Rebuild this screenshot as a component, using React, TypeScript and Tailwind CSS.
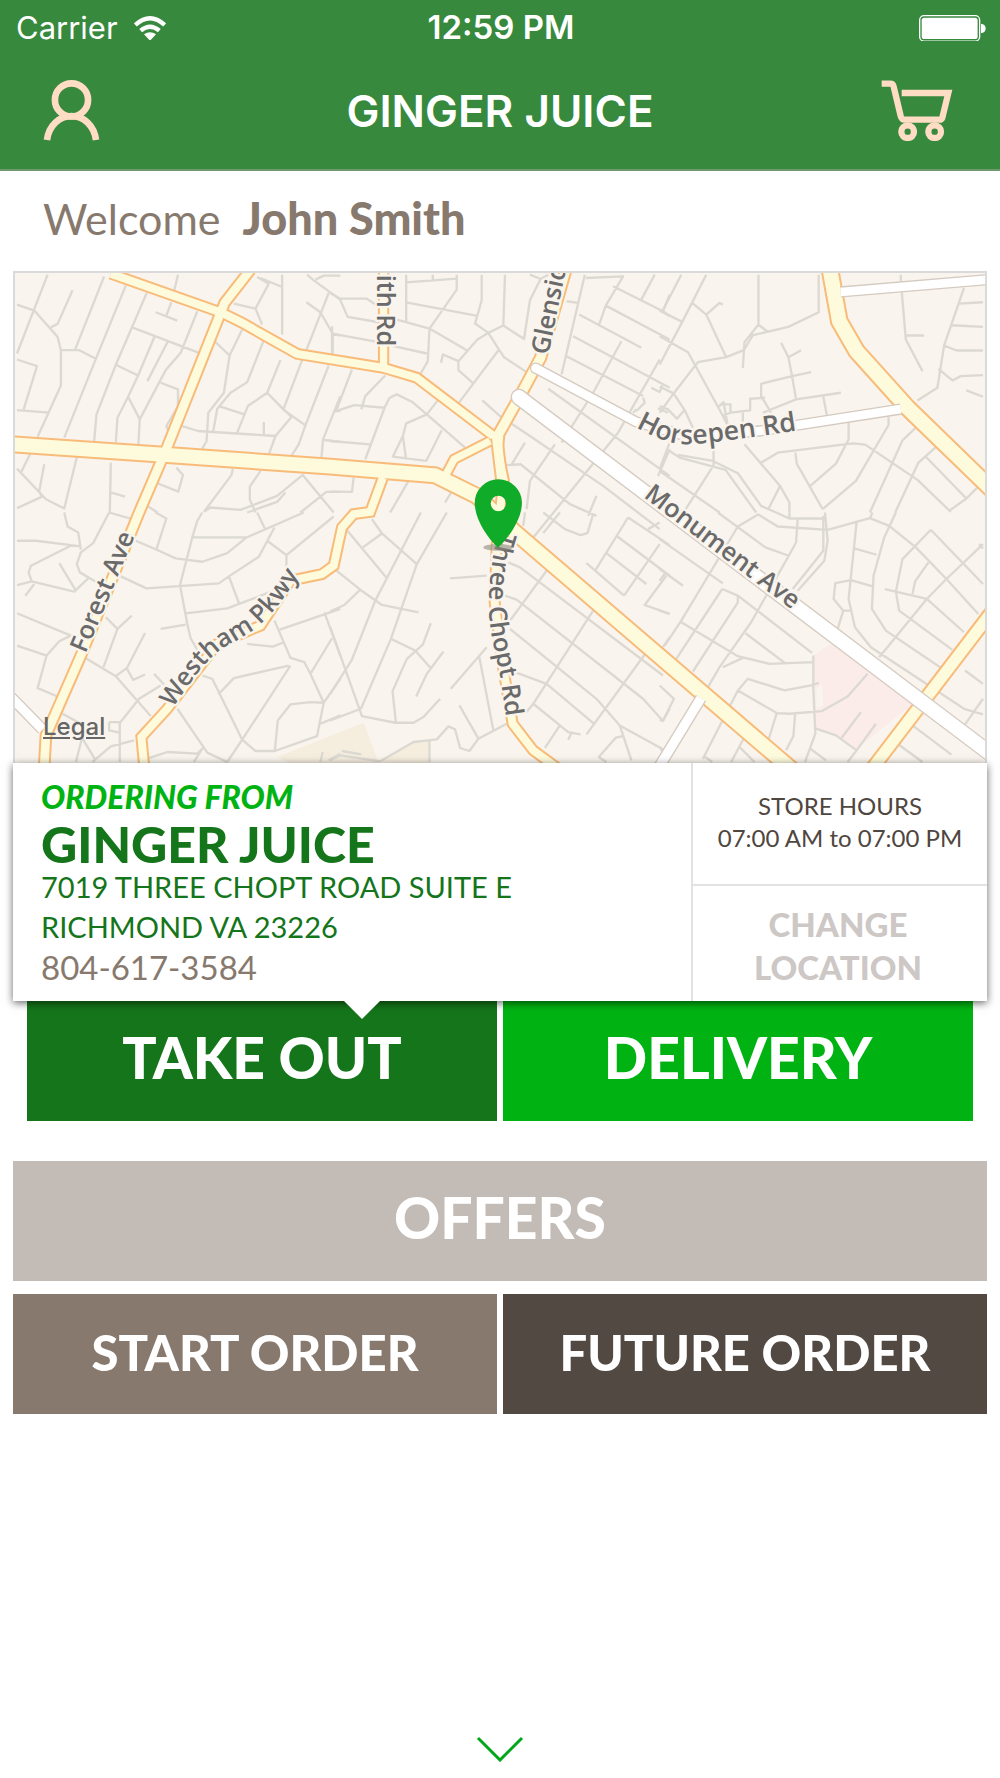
import React from "react";

type StreetTile = { x: number; y: number; d: string };

// Side streets, grouped by map tile. Each path is local to its tile.
const STREET_TILES: StreetTile[] = [
  {
    x: 0,
    y: 780,
    d: `M140 35L48 272M215 82L170 183L150 193M48 125L100 143L170 222L180 262V368L110 522M180 262H235L285 288
      M310 40L222 262M375 68L285 288L190 525M438 90L345 306L287 455L280 535M48 290L108 310L68 440M48 442L145 450
      M532 35L520 85M465 148L530 173M512 118L497 158M590 145L540 270L495 322L417 470L413 545M390 192L595 270
      M462 220L412 338L382 402L350 465L345 540M382 402L417 470M345 306L412 338M503 233L440 355M480 360L532 380V430L497 490L503 505
      M700 122L765 137L805 62L770 42M765 137L785 185M780 45L845 72M845 35V215M645 238L687 278L725 200M687 278L670 390L623 450L618 535L605 558
      M790 232L740 358L690 390L650 438L638 505M655 430L732 455L742 430L800 390L840 292M732 455L710 510M545 490L592 505L825 520L873 463L800 390M790 478V520
      M825 520L805 575M848 442L905 292M800 390L850 442L915 488L985 308M915 488L895 545L873 580M920 35L940 52L1020 110M945 50L970 38H1020M985 90L918 262
      M918 118L960 148L997 212L1020 218M997 212V275M1020 400L968 530L963 588M972 532L1020 538M1005 445H1020
      M88 573L60 630M48 618L135 710L190 738L228 583M130 605L115 685L122 703L48 737M330 600L327 750M332 690L373 702M527 615L547 637L533 687L470 662
      M440 730L470 750M697 618L693 637L610 748M780 625L748 672V712L765 750M610 748L630 735L720 742L830 700L907 637L1000 750M855 690L830 718L740 750M900 750L978 688H1020`,
  },
  {
    x: 990,
    y: 780,
    d: `M0 90L28 107L52 162L145 178M28 107H108L145 130M5 190V275M5 212L145 238M200 170L298 197L410 262M298 197L293 295L270 335
      M228 35V175M228 58L380 47M308 35V50M380 35V80L298 197M228 118L438 158M455 35V112L435 182L475 210L520 188L585 230M525 35L520 188
      M475 210L507 260L522 283L590 328M475 210L442 230L385 295V322L428 360M385 295L338 275L333 300M507 260L385 422M190 250L290 272
      M165 338L105 400L93 440M65 320L17 445L72 427L163 435L105 590M178 405L200 395L245 417L290 455L228 482L218 520L228 592M178 405L163 435M218 520L188 582L288 595L335 503M325 410L290 455L405 555M0 535L118 545
      M600 35L632 48M655 35L632 48L600 112L582 230M765 35L695 335M768 45L880 40L828 128L808 185M710 115L745 120M748 155L935 255M850 70L1000 145L1020 160M975 35L935 110M828 128L1020 230M1020 95L1000 145
      M730 220L1020 375M710 280L940 400M875 235L790 390L695 540M990 290L865 510L590 850M940 405L945 420L920 445M965 375L990 388L998 368M985 437L1015 450M920 440L910 450M655 378L1020 640M457 413L510 460L600 520L820 670L990 800
      M525 608L572 605L720 725L800 760M545 605L585 540M675 545L600 655L590 740M1020 560L985 640M800 700L775 760M70 645L65 688L0 687M235 655L180 750M375 670L345 720`,
  },
  {
    x: 1980,
    y: 780,
    d: `M65 35L8 145M0 143L68 177M140 35L68 177L0 305M98 120L140 155L200 283M140 155L180 120L190 125M0 220L85 268L107 308L185 450L205 490M107 308L115 298L200 283L253 262L280 217L387 192L478 148V35
      M250 315L255 238L297 185V35M297 185L325 207M107 308L42 392L0 450M0 372L42 392L75 442L100 495M0 430L25 440L52 468L75 442M175 435L192 418L205 490M180 425H213V450L272 443V408L317 405M188 460L213 450M250 450V485
      M365 240L387 283L398 340L410 410L310 450M387 283L425 262M455 328L398 340L305 363V400L335 450M410 410L545 390M492 402L503 460M568 480V530L530 603L453 670
      M725 35V55M728 88L740 230L790 325M740 218H795M915 75L855 248L835 375L775 413M900 122L972 118M877 187L972 192M855 248L892 263H972M838 318L880 353L905 340L972 337M922 383L972 402
      M688 462V487L590 655L490 740M772 493L730 533L632 750M832 552L778 600L708 750M798 580L922 708M955 675L922 708L870 745M305 600L355 570L580 542L618 546L775 652L875 748M408 570L412 603L490 740
      M255 545L362 670L390 720V750M362 670L328 737M162 560V608L75 745M55 577L160 595L235 632L305 730L350 750M30 565L60 585L198 622L290 750M30 540L0 620M0 625L180 750`,
  },
  {
    x: 0,
    y: 1530,
    d: `M190 0L200 42L232 60L240 112M48 85H105L240 102M205 102L90 160L83 180L92 207L220 238L262 198M48 218L92 207M100 215L73 250M175 152L225 235M325 0L277 92L240 120L228 155L237 180L285 208M325 0L395 20M465 0L497 18L468 108
      M405 85L468 112L525 138L605 148L680 122L738 75L910 0M575 75H738M605 0L590 25L575 75L538 218L560 335L570 378L600 430M360 192L437 228L655 213L685 192L775 133L822 45M770 0L793 48M800 85L858 128L1000 12M858 128V190M685 192L715 272
      M555 303L680 288L820 235M480 350L555 337M48 303L210 370L175 387L137 430L110 528L170 553M48 400L137 430M315 315L350 350L393 310M350 350L308 465M250 435L345 492L415 572L450 612M345 492L378 468L433 362M378 468L397 503L433 487
      M480 520L415 560L357 633V750M325 630H357V662L325 655V630M460 485L490 517M605 490L635 500L725 683L765 717H823L950 672L970 572L930 485L912 450L870 437L822 325M725 683L680 750M725 683L870 460M865 460L700 498L653 547M740 395L817 403L850 390M838 352L1020 290
      M972 300L1020 430M995 378L930 485M970 572L930 570L870 577L832 625L823 717M970 572L1020 500M960 635L1020 610M530 590L620 722L680 750M440 740L500 720L590 725L605 710L580 750M400 685L330 703L283 743L245 680M283 743L275 750M185 605L240 635M243 680L225 750M960 750L967 720M985 745L1020 725`,
  },
  {
    x: 990,
    y: 1530,
    d: `M35 35L172 200M125 20L155 63L260 155M155 63L98 105M272 0L135 265L65 442L0 545M350 0L260 155L182 380L92 590M0 160L90 232L155 278L265 300M90 232L42 278L0 297M0 345L95 612L195 632H250L280 615L330 560M92 590L0 625
      M182 380L255 415L302 468M302 333L278 397L230 440L187 537L197 632M340 418L290 485L258 553M360 198L470 190M470 405L362 530M448 435L490 655M388 580L445 680L530 635M445 680L418 717L390 708L375 652L355 643L320 682L250 690L150 748M298 688V750M0 745L30 730L150 748M35 717L93 727
      M535 150L570 165L1000 490M525 250L560 262L940 560L1000 627L1020 590M540 350L800 560M650 175L540 325M790 295L610 575M555 480L650 515L795 637M800 560L870 640L1000 712M610 575L715 660L752 667M725 662L715 683M690 640L645 708M770 667L950 420M590 600L610 575M870 640L905 745M880 672L858 677L807 735L830 750
      M640 0L705 50L752 68L773 62L790 5M690 0L640 62M585 0L580 40M770 152L883 250M860 70L1020 190M895 15L798 172M830 122L950 215M990 30L955 50M895 15L1020 98M990 95L883 250M1010 190L945 278L1020 305M1000 405L1020 375`,
  },
  {
    x: 1980,
    y: 1530,
    d: `M175 0L318 105L388 130M297 5L235 42L65 325L15 400M295 5L355 42L505 52L632 17L690 40L770 105L862 200L958 305M350 0L390 18H495M390 0V18M415 20L410 90L388 130L275 330L180 465L125 560M497 0L505 85L495 145L415 235M492 10V115L400 230
      M592 30L568 260L587 345L635 405L915 590L972 607M585 108L652 127M710 0L675 75L643 190L638 290L680 355L880 490M640 222L575 203L528 212L523 260L552 295H573M552 295L535 350M632 17L640 0M815 52L730 140L710 238L720 295L880 413M815 52L972 215M808 150L768 207L760 245M677 230L803 260L915 360M972 95L862 200L803 260L660 435M960 95L972 108
      M918 475L972 515M972 560L918 637M0 80L190 213M0 170L70 220M0 295L30 305M188 230L235 250L458 422M188 230L50 440M235 250V270L100 478M65 330L235 432L330 455L462 450M258 363L380 455M250 437L190 465M15 185L0 205
      M235 535L265 500L375 535L455 520L478 512M235 535L352 603L390 605L488 597L565 553L625 485M235 535L130 740M352 603L325 690M407 608L402 672L380 715M462 430V530L468 665L437 750M470 650L530 670L592 715L565 750M605 600L545 680M650 635L592 715M450 708L500 745M242 707L285 750M255 675L215 750M137 735L158 750M760 640L877 728M715 695L790 750M0 520L43 560L10 625H0M0 705L10 720`,
  },
];

const YELLOW_ROADS = [
  { d: "M330 812L665 930L725 960L890 1053L1150 1095L1250 1125L1480 1300", w: 36 },
  { d: "M750 800L672 900L500 1332L415 1530L240 1960L135 2200L130 2290", w: 38 },
  { d: "M1150 800V1092", w: 34 },
  { d: "M1698 800L1622 1065L1560 1180L1490 1305L1505 1430", w: 40 },
  { d: "M1500 1300L1495 1345L1515 1440", w: 32 },
  { d: "M1470 1315L1362 1370L1335 1420", w: 34 },
  { d: "M1148 1425L1110 1528L1060 1535L1025 1575L1000 1690L965 1715L870 1735L780 1870L650 1925L500 2120L422 2205L430 2290", w: 36 },
  { d: "M1510 1430L1490 1630L1484 1800L1510 2000L1538 2165L1600 2245L1675 2300", w: 36 },
  { d: "M30 1325L500 1357L990 1392L1305 1418L1430 1480L1540 1585L2010 1988L2380 2305", w: 54 },
  { d: "M2492 800L2520 955L2572 1045L2725 1215L2990 1472", w: 56 },
  { d: "M2985 1820L2615 2305", w: 46 },
];

const WHITE_ROADS = [
  { d: "M1605 1095L1910 1258L2060 1300L2280 1285L2705 1219", w: 34 },
  { d: "M1555 1182L2990 2267", w: 50 },
  { d: "M2524 867L2990 828", w: 34 },
  { d: "M2104 2088L1978 2295", w: 36 },
  { d: "M30 2085L125 2182", w: 36 },
];

const ROAD_ENDS = [
  { cx: 1607, cy: 1096, r: 17 },
  { cx: 1557, cy: 1183, r: 25 },
];

const StoreMap = () => (
  <svg
    viewBox="42 810 2916 1473"
    className="block w-full"
    role="img"
    aria-label="Map of the store location"
  >
    <defs>
      <path id="forest" d="M254 1955L424 1548" />
      <path id="westham" d="M516 2118C586 2016 626 1956 696 1921S832 1836 925 1666" />
      <path id="chopt" d="M1500 1585Q1480 1640 1474 1700Q1460 1800 1473 1890L1500 2020L1535 2260" />
      <path id="glenside" d="M1645 1058L1715 720" />
      <path id="horsepen" d="M1908 1274Q2000 1325 2060 1325Q2130 1325 2460 1273" />
      <path id="monument" d="M1930 1483L2500 1915" />
    </defs>

    <rect x="42" y="810" width="2916" height="1473" fill="#f9f4ed" />
    <path d="M2442 1960L2495 1925L2740 2105L2572 2242L2510 2200L2450 2180Z" fill="#fbecea" />
    <path d="M2452 2060L2468 2045L2472 2110L2450 2118Z" fill="#f9f4ed" />
    <path d="M830 2265L1090 2162L1138 2290H880ZM1140 2280L1240 2220L1288 2215V2290Z" fill="#f5eddd" />

    <g fill="none" stroke="#dcd9d2" strokeWidth="7" strokeLinejoin="round">
      {STREET_TILES.map((tile) => (
        <path key={`${tile.x}-${tile.y}`} d={tile.d} transform={`translate(${tile.x} ${tile.y})`} />
      ))}
    </g>

    <g fill="none" stroke="#f8bb79">
      {YELLOW_ROADS.map((road) => (
        <path key={road.d} d={road.d} strokeWidth={road.w} />
      ))}
    </g>
    <g fill="none" stroke="#fdfbdb">
      {YELLOW_ROADS.map((road) => (
        <path key={road.d} d={road.d} strokeWidth={road.w - 12} />
      ))}
    </g>
    <g fill="none" stroke="#d5cac0">
      {WHITE_ROADS.map((road) => (
        <path key={road.d} d={road.d} strokeWidth={road.w} />
      ))}
      {ROAD_ENDS.map((end) => (
        <circle key={end.cx} cx={end.cx} cy={end.cy} r={end.r} fill="#d5cac0" stroke="none" />
      ))}
    </g>
    <g fill="none" stroke="#ffffff">
      {WHITE_ROADS.map((road) => (
        <path key={road.d} d={road.d} strokeWidth={road.w - 8} />
      ))}
      {ROAD_ENDS.map((end) => (
        <circle key={end.cx} cx={end.cx} cy={end.cy} r={end.r - 4} fill="#ffffff" stroke="none" />
      ))}
    </g>

    <g
      fill="#6a6a6a"
      stroke="#f9f4ed"
      strokeWidth="14"
      strokeLinejoin="round"
      paintOrder="stroke"
      fontSize="76"
      className="font-['Open_Sans',sans-serif] font-semibold"
    >
      <text><textPath href="#forest">Forest Ave</textPath></text>
      <text><textPath href="#westham">Westham Pkwy</textPath></text>
      <text><textPath href="#chopt">Three Chopt Rd</textPath></text>
      <text><textPath href="#glenside">Glensid</textPath></text>
      <text fontSize="80"><textPath href="#horsepen">Horsepen Rd</textPath></text>
      <text><textPath href="#monument">Monument Ave</textPath></text>
      <text transform="translate(1131 1030) rotate(90)" textAnchor="end">ith Rd</text>
    </g>

    <ellipse cx="1494" cy="1635" rx="44" ry="10" fill="#8d897c" opacity="0.6" />
    <path
      fillRule="evenodd"
      fill="#10ab28"
      d="M1424 1501a71 71 0 0 1 142 0C1566 1545 1532 1600 1494 1636C1456 1600 1424 1545 1424 1501ZM1495 1480a23 23 0 1 0 0 46a23 23 0 0 0 0-46Z"
    />
  </svg>
);

const StatusBar = () => (
  <div className="grid grid-cols-3 items-center h-14 pl-4 pr-[14px] text-white">
    <div className="flex items-center gap-4 text-[31px]">
      <span>Carrier</span>
      <svg viewBox="0 0 96 74" className="w-8" fill="none" stroke="#ffffff" strokeWidth="13">
        <path d="M4 27Q48 -13 92 27" />
        <path d="M20 44Q48 20 76 44" />
        <path d="M48 74L30 55Q48 42 66 55Z" fill="#ffffff" stroke="none" />
      </svg>
    </div>
    <span className="text-center text-[33px] font-semibold whitespace-nowrap">12:59 PM</span>
    <svg viewBox="0 0 200 80" className="w-[67px] justify-self-end" fill="#ffffff">
      <rect x="2" y="2" width="179" height="76" rx="13" fill="none" stroke="#ffffff" strokeWidth="4" />
      <rect x="8" y="8" width="167" height="64" rx="8" />
      <path d="M185 26Q199 28 199 40T185 54Z" />
    </svg>
  </div>
);

const NavBar = () => (
  <div className="grid grid-cols-[1fr_auto_1fr] items-center pt-6 pb-7 px-[43px]">
    <button type="button" aria-label="Account" className="justify-self-start">
      <svg viewBox="126 238 172 184" className="w-[57px]" fill="none" stroke="#ffdcc4" strokeWidth="20">
        <circle cx="212" cy="298" r="50" />
        <path d="M138 419C144 374 176 347 212 347S280 374 286 419" />
      </svg>
    </button>
    <h1 className="text-white text-[44px] leading-[60px] font-semibold">GINGER JUICE</h1>
    <button type="button" aria-label="Cart" className="justify-self-end pr-1">
      <svg viewBox="1146 242 216 184" className="w-[72px]" fill="none" stroke="#ffdcc4" strokeWidth="19">
        <path d="M1148 253H1174Q1182 253 1184 262L1205 350Q1208 361 1216 361H1322Q1328 361 1330 355L1348 281H1208" />
        <circle cx="1226" cy="397" r="19" />
        <circle cx="1307" cy="397" r="19" />
      </svg>
    </button>
  </div>
);

const StoreCard = () => (
  <section className="relative z-10 flex bg-white shadow-[0_2px_8px_rgba(0,0,0,0.6)]">
    <div className="flex-1 pt-[14px] pb-[14px] pl-7">
      <p className="text-[32px] leading-10 font-black italic text-[#00b312]">ORDERING FROM</p>
      <h2 className="mt-1 text-[50px] leading-[46px] font-black text-[#14751a]">GINGER JUICE</h2>
      <address className="not-italic text-[29px] leading-10 text-[#14751a]">
        7019 THREE CHOPT ROAD SUITE E
        <br />
        RICHMOND VA 23226
      </address>
      <a href="tel:804-617-3584" className="block text-[33px] leading-10 text-[#87796d]">
        804-617-3584
      </a>
    </div>
    <div className="flex flex-col w-[296px] border-l-2 border-[#e2e2e2] text-center">
      <div className="flex flex-col justify-center h-[121px] pb-1 text-2xl leading-8 text-[#4f4640]">
        <p>STORE HOURS</p>
        <p>07:00 AM to 07:00 PM</p>
      </div>
      <button
        type="button"
        className="flex-1 pt-1 pr-1 border-t-2 border-[#e2e2e2] text-[33px] leading-[43px] font-black text-[#cdc8c5]"
      >
        CHANGE
        <br />
        LOCATION
      </button>
    </div>
    <svg viewBox="0 0 36 18" className="absolute top-full left-[34%] w-9" fill="#ffffff">
      <path d="M0 0H36L18 18Z" />
    </svg>
  </section>
);

export default function App() {
  return (
    <div className="flex flex-col min-h-screen bg-white font-['Lato',sans-serif]">
      <header className="bg-[#37893d] border-b-2 border-[#6f9a70] font-['Inter',sans-serif]">
        <StatusBar />
        <NavBar />
      </header>

      <main className="px-[13px]">
        <p className="flex items-baseline gap-[22px] pt-4 pb-[21px] pl-[30px] text-[#87796d]">
          <span className="text-[43px] leading-[62px]">Welcome</span>
          <strong className="text-[45px] leading-[62px] font-black">John Smith</strong>
        </p>

        <div className="relative border-2 border-b-0 border-[#dadada]">
          <StoreMap />
          <a
            href="#legal"
            className="absolute bottom-5 left-7 text-2xl font-medium text-[#666666] underline font-['Inter',sans-serif]"
          >
            Legal
          </a>
        </div>
        <StoreCard />

        <div className="grid grid-cols-2 gap-[6px] px-[14px] text-[57px] font-black text-white">
          <button type="button" className="h-[120px] pb-2 bg-[#14751a]">TAKE OUT</button>
          <button type="button" className="h-[120px] pb-2 bg-[#00b312]">DELIVERY</button>
        </div>

        <button type="button" className="block w-full h-[120px] mt-10 pb-2 bg-[#c3bbb5] text-[57px] font-black text-white">
          OFFERS
        </button>
        <div className="grid grid-cols-2 gap-[6px] mt-[13px] text-[49px] font-black text-white">
          <button type="button" className="h-[120px] pb-1 bg-[#87796d]">START ORDER</button>
          <button type="button" className="h-[120px] pb-1 bg-[#514942]">FUTURE ORDER</button>
        </div>
      </main>

      <button type="button" aria-label="Show more" className="mx-auto mt-auto pt-4 pb-4">
        <svg viewBox="0 0 48 26" className="w-12" fill="none" stroke="#00a818" strokeWidth="3">
          <path d="M2 2L24 24L46 2" />
        </svg>
      </button>
    </div>
  );
}
